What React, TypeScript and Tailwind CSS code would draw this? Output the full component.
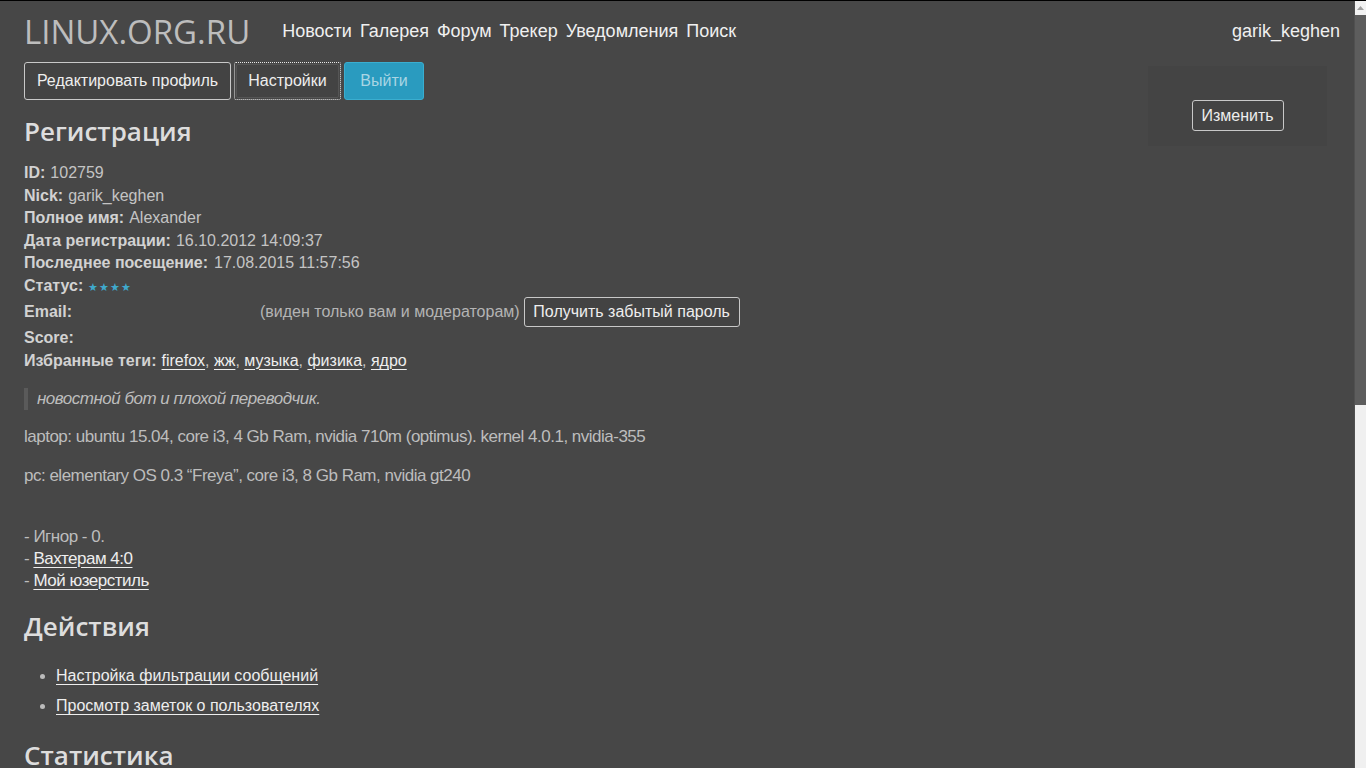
import React from "react";

const sans = { fontFamily: '"Liberation Sans", Arial, sans-serif' };

function Btn({ children, className = "" }: { children: React.ReactNode; className?: string }) {
  return (
    <span
      className={
        "inline-flex items-center justify-center border border-[#c8c8c8] rounded-[3px] bg-[#434343] text-[#eeeeee] text-[16px] " +
        className
      }
    >
      {children}
    </span>
  );
}

function Row({ label, children, className = "" }: { label: string; children?: React.ReactNode; className?: string }) {
  return (
    <div className={"flex items-center h-[22.5px] " + className}>
      <b className="font-bold text-[#d2d2d2]">{label}</b>
      {children}
    </div>
  );
}

function Link({ children }: { children: React.ReactNode }) {
  return <span className="underline text-[#eeeeee] decoration-1 underline-offset-[3px]">{children}</span>;
}

const narrow = { fontFamily: '"Liberation Sans", sans-serif', fontSize: 17, letterSpacing: "-0.5px" };

export default function App() {
  return (
    <div className="h-screen w-full flex overflow-hidden bg-[#474747] border-t border-black" style={sans}>
      <div className="flex-1 pl-6 pr-[14px] block">
        {/* header */}
        <div className="flex items-start h-[61px]">
          <div className="text-[33px] leading-none font-medium text-[#bdbdbd] mt-[14px]" style={{ fontFamily: '"Open Sans", sans-serif' }}>
            LINUX.ORG.RU
          </div>
          <nav className="flex gap-[8px] ml-[32px] mt-[17px] text-[18px] text-[#f0f0f0]">
            <span>Новости</span>
            <span>Галерея</span>
            <span>Форум</span>
            <span>Трекер</span>
            <span>Уведомления</span>
            <span>Поиск</span>
          </nav>
          <div className="ml-auto mt-[17px] text-[18px] text-[#f0f0f0]">garik_keghen</div>
        </div>

        <div className="flex">
          <div className="flex-1 text-[16px] text-[#c4c4c4]">
            <div className="flex gap-[3px] h-[38px]">
              <Btn className="w-[207px] h-[38px]">Редактировать профиль</Btn>
              <span className="inline-flex items-center justify-center w-[107px] h-[38px] border border-dotted border-[#e8e8e8] rounded-[2px] p-[1px]">
                <span className="flex items-center justify-center w-full h-full border border-[#555] rounded-[2px] bg-[#434343] text-[#eeeeee]">Настройки</span>
              </span>
              <span className="inline-flex items-center justify-center w-[80px] h-[38px] rounded-[3px] bg-[#2a9bbf] border border-[#3aaed0] text-[#a9d5e4]">Выйти</span>
            </div>

            <h2 className="mt-[15px] text-[26px] leading-[32px] font-semibold text-[#dddddd]" style={{ fontFamily: '"Open Sans", sans-serif' }}>
              Регистрация
            </h2>

            <div className="mt-[15px]">
              <Row label="ID:"><span className="ml-[5px]">102759</span></Row>
              <Row label="Nick:"><span className="ml-[5px]">garik_keghen</span></Row>
              <Row label="Полное имя:"><span className="ml-[5px]">Alexander</span></Row>
              <Row label="Дата регистрации:"><span className="ml-[5px]">16.10.2012 14:09:37</span></Row>
              <Row label="Последнее посещение:"><span className="ml-[6px]">17.08.2015 11:57:56</span></Row>
              <Row label="Статус:">
                <span className="ml-[5px] text-[11px] tracking-[1px] text-[#3fa9cc] mt-[2px]">★★★★</span>
              </Row>
              <div className="flex items-center h-[30px]">
                <b className="font-bold text-[#d2d2d2] w-[236px]">Email:</b>
                <span className="text-[#b4b4b4]">(виден только вам и модераторам)</span>
                <Btn className="ml-[4px] w-[216px] h-[30px]">Получить забытый пароль</Btn>
              </div>
              <Row label="Score:" />
              <div className="flex items-center h-[22.5px]">
                <b className="font-bold text-[#d2d2d2]">Избранные теги:</b>
                <span className="ml-[5px]">
                  <Link>firefox</Link>, <Link>жж</Link>, <Link>музыка</Link>, <Link>физика</Link>, <Link>ядро</Link>
                </span>
              </div>
            </div>

            <div
              className="mt-[16px] border-l-[4px] border-[#5a5a5a] pl-[9px] h-[22px] flex items-center italic text-[#bdbdbd]"
              style={narrow}
            >
              новостной бот и плохой переводчик.
            </div>

            <div className="text-[#bdbdbd]" style={narrow}>
              <p className="mt-[16px] leading-[22px]">laptop: ubuntu 15.04, core i3, 4 Gb Ram, nvidia 710m (optimus). kernel 4.0.1, nvidia-355</p>
              <p className="mt-[17px] leading-[22px]">pc: elementary OS 0.3 “Freya”, core i3, 8 Gb Ram, nvidia gt240</p>
              <div className="h-[22px] mt-[17px]"></div>
              <div className="leading-[22px]">- Игнор - 0.</div>
              <div className="leading-[22px]">- <Link>Вахтерам 4:0</Link></div>
              <div className="leading-[22px]">- <Link>Мой юзерстиль</Link></div>
            </div>

            <h2 className="mt-[18px] text-[26px] leading-[32px] font-semibold text-[#dddddd]" style={{ fontFamily: '"Open Sans", sans-serif' }}>
              Действия
            </h2>
            <ul className="mt-[23px] pl-[32px] list-disc marker:text-[#bbbbbb] text-[#eeeeee]">
              <li className="h-[22px] leading-[22px]"><Link>Настройка фильтрации сообщений</Link></li>
              <li className="h-[22px] leading-[22px] mt-[8px]"><Link>Просмотр заметок о пользователях</Link></li>
            </ul>
            <h2 className="mt-[22px] text-[26px] leading-[32px] font-semibold text-[#dddddd]" style={{ fontFamily: '"Open Sans", sans-serif' }}>
              Статистика
            </h2>
          </div>

          <div className="w-[179px] h-[80px] mt-[4px] mr-[13px] bg-[#444444] flex items-start justify-center pt-[34px]">
            <Btn className="w-[92px] h-[31px]">Изменить</Btn>
          </div>
        </div>
      </div>

      {/* scrollbar */}
      <div className="w-[12px] flex flex-col bg-[#5d5d5d] border-l border-[#505050] shrink-0">
        <div className="h-[14px] bg-[#f2f2f2] flex items-center justify-center shrink-0">
          <svg width="7" height="4" viewBox="0 0 7 4"><path d="M0 4 L3.5 0 L7 4 Z" fill="#a0a0a0" /></svg>
        </div>
        <div className="h-[390px] shrink-0"></div>
        <div className="flex-1 bg-[#f0f0f0]"></div>
      </div>
    </div>
  );
}
